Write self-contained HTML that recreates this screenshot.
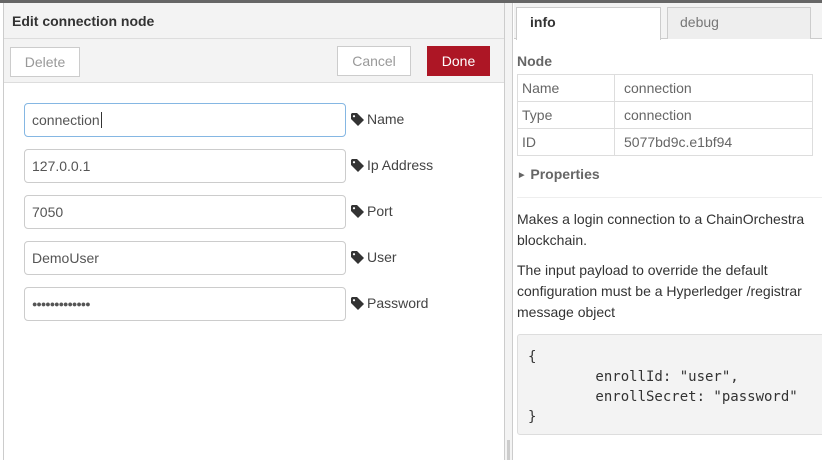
<!DOCTYPE html>
<html><head><style>
*{box-sizing:border-box;margin:0;padding:0}
body{width:822px;height:460px;overflow:hidden;background:#fff;font-family:"Liberation Sans",sans-serif;font-size:14px;color:#333;position:relative}
.abs{position:absolute}
.inp{position:absolute;left:24px;width:322px;height:34px;border:1px solid #ccc;border-radius:4px;padding-left:7px;line-height:32px;font-size:14px;color:#555}
.lbl{position:absolute;left:351px;font-size:14px;color:#444}
.lbl svg{vertical-align:-2px;margin-right:3px}
td{border:1px solid #ddd;padding:0 4px;height:27px;font-size:14px;color:#666}
</style></head><body>
<div class="abs" style="left:0;top:0;width:822px;height:3px;background:#666"></div>
<div class="abs" style="left:3px;top:3px;width:502px;height:457px;border-left:1px solid #ccc;border-right:1px solid #ccc"></div>
<div class="abs" style="left:4px;top:3px;width:500px;height:36px;background:#f3f3f3;border-bottom:1px solid #ddd"></div>
<div class="abs" style="left:12px;top:13px;font-weight:bold;font-size:14px;color:#333">Edit connection node</div>
<div class="abs" style="left:4px;top:39px;width:500px;height:44px;background:#f3f3f3;border-bottom:1px solid #ddd"></div>
<div class="abs" style="left:10px;top:47px;width:70px;height:30px;border:1px solid #ccc;background:#fff;color:#999;text-align:center;line-height:28px">Delete</div>
<div class="abs" style="left:337px;top:46px;width:74px;height:30px;border:1px solid #ccc;background:#fff;color:#999;text-align:center;line-height:28px">Cancel</div>
<div class="abs" style="left:427px;top:46px;width:63px;height:30px;background:#ad1625;color:#fff;text-align:center;line-height:30px">Done</div>

<div class="inp" style="top:103px;border-color:#85b7e3">connection<span style="border-left:1px solid #333;margin-left:1px"></span></div>
<div class="inp" style="top:149px">127.0.0.1</div>
<div class="inp" style="top:195px">7050</div>
<div class="inp" style="top:241px">DemoUser</div>
<div class="inp" style="top:287px;font-size:9px;letter-spacing:-1px">●●●●●●●●●●●●●</div>
<div class="lbl" style="top:111px"><svg width="13" height="13" viewBox="0 0 13 13"><path d="M0 1v5l7 7 6-6-7-7H1z" fill="#333"/><circle cx="3" cy="3.2" r="1.1" fill="#fff"/></svg>Name</div>
<div class="lbl" style="top:157px"><svg width="13" height="13" viewBox="0 0 13 13"><path d="M0 1v5l7 7 6-6-7-7H1z" fill="#333"/><circle cx="3" cy="3.2" r="1.1" fill="#fff"/></svg>Ip Address</div>
<div class="lbl" style="top:203px"><svg width="13" height="13" viewBox="0 0 13 13"><path d="M0 1v5l7 7 6-6-7-7H1z" fill="#333"/><circle cx="3" cy="3.2" r="1.1" fill="#fff"/></svg>Port</div>
<div class="lbl" style="top:249px"><svg width="13" height="13" viewBox="0 0 13 13"><path d="M0 1v5l7 7 6-6-7-7H1z" fill="#333"/><circle cx="3" cy="3.2" r="1.1" fill="#fff"/></svg>User</div>
<div class="lbl" style="top:295px"><svg width="13" height="13" viewBox="0 0 13 13"><path d="M0 1v5l7 7 6-6-7-7H1z" fill="#333"/><circle cx="3" cy="3.2" r="1.1" fill="#fff"/></svg>Password</div>

<div class="abs" style="left:505px;top:3px;width:8px;height:457px;background:#f3f3f3;border-right:1px solid #ccc"></div>
<div class="abs" style="left:507px;top:440px;width:3px;height:20px;background:#ccc"></div>

<div class="abs" style="left:514px;top:3px;width:308px;height:36px;background:#f3f3f3;border-bottom:1px solid #ccc"></div>
<div class="abs" style="left:516px;top:7px;width:145px;height:33px;background:#fff;border:1px solid #ccc;border-bottom:none;font-weight:bold;color:#333;padding:6px 0 0 13px">info</div>
<div class="abs" style="left:667px;top:7px;width:144px;height:32px;background:#eee;border:1px solid #ccc;border-bottom:none;color:#777;padding:6px 0 0 12px">debug</div>
<div class="abs" style="left:517px;top:53px;font-weight:bold;color:#666">Node</div>
<table class="abs" style="left:517px;top:74px;width:296px;border-collapse:collapse">
<tr><td style="width:97px">Name</td><td style="padding-left:9px">connection</td></tr>
<tr><td>Type</td><td style="padding-left:9px">connection</td></tr>
<tr><td>ID</td><td style="padding-left:9px">5077bd9c.e1bf94</td></tr>
</table>
<div class="abs" style="left:519px;top:166px;font-weight:bold;color:#666"><span style="font-size:7px;vertical-align:2px;margin-right:6px">▶</span>Properties</div>
<div class="abs" style="left:517px;top:197px;width:305px;height:1px;background:#eee"></div>
<div class="abs" style="left:517px;top:209px;width:300px;line-height:21px;color:#333">Makes a login connection to a ChainOrchestra blockchain.</div>
<div class="abs" style="left:517px;top:260px;width:300px;line-height:21px;color:#333">The input payload to override the default configuration must be a Hyperledger /registrar message object</div>
<div class="abs" style="left:517px;top:334px;width:310px;height:101px;background:#f3f3f3;border:1px solid #ddd;border-radius:3px;padding:12px 0 0 10px;font-family:'DejaVu Sans Mono',monospace;font-size:14px;line-height:20px;white-space:pre;color:#333">{
        enrollId: "user",
        enrollSecret: "password"
}</div>
</body></html>
